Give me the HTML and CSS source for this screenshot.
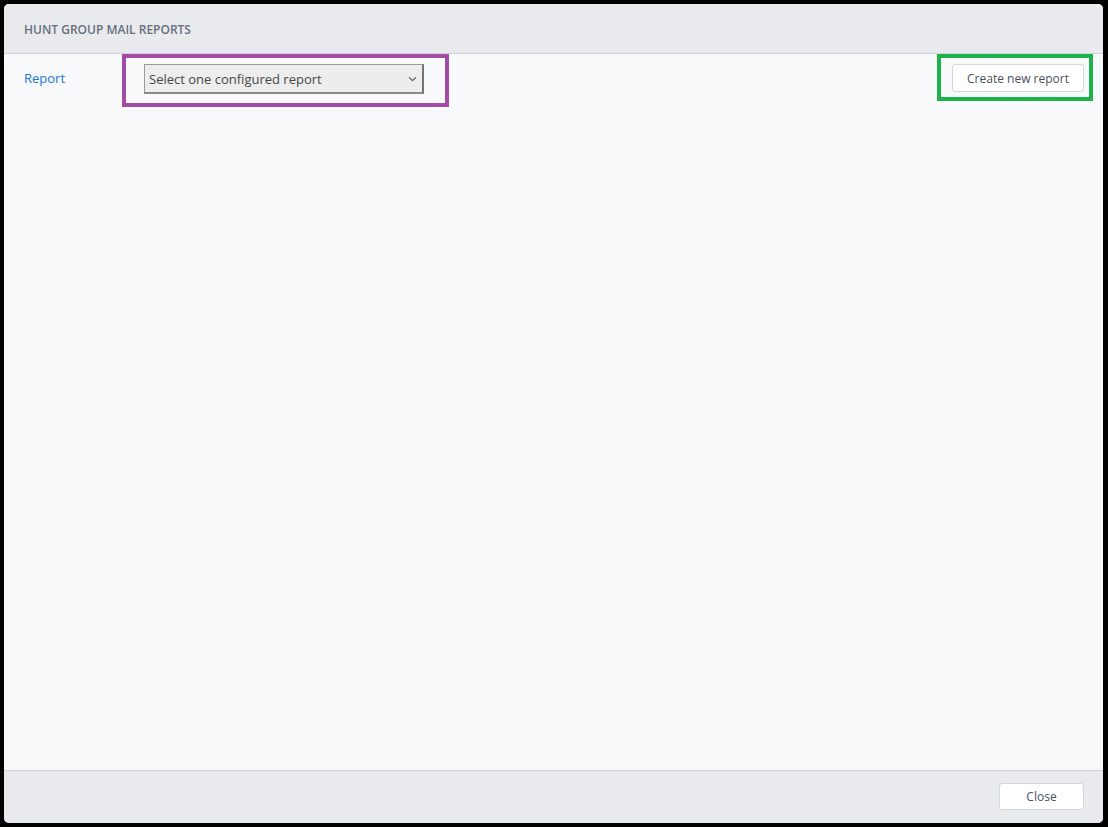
FILE: index.html
```html
<!DOCTYPE html>
<html>
<head>
<meta charset="utf-8">
<link rel="stylesheet" href="styles.css">
</head>
<body>
<div class="modal">
  <div class="modal-header">
    <span class="title">HUNT GROUP MAIL REPORTS</span>
  </div>
  <div class="modal-body">
    <div class="row">
      <a class="label" href="#">Report</a>
      <div class="hl-purple">
        <div class="select">
          <span>Select one configured report</span>
          <svg class="chev" width="9" height="6" viewBox="0 0 9 6"><path d="M1 1.2 L4.5 4.5 L8 1.2" fill="none" stroke="#6f6f6f" stroke-width="1.3"/></svg>
        </div>
      </div>
      <div class="spacer"></div>
      <div class="hl-green">
        <button class="btn">Create new report</button>
      </div>
    </div>
  </div>
  <div class="modal-footer">
    <button class="btn btn-close">Close</button>
  </div>
</div>
</body>
</html>
```
FILE: styles.css
```css
html, body {
  margin: 0;
  padding: 0;
  background: #000;
  width: 1108px;
  height: 827px;
  overflow: hidden;
}
body {
  font-family: "Open Sans", "Liberation Sans", sans-serif;
  padding: 4px 5px 4px 4px;
  box-sizing: border-box;
}
.modal {
  width: 1099px;
  height: 819px;
  background: #f8f9fb;
  border-radius: 5px;
  display: flex;
  flex-direction: column;
  overflow: hidden;
}
.modal-header {
  height: 49px;
  background: #e9eaed;
  border-bottom: 1px solid #cfd2d7;
  display: flex;
  align-items: center;
  padding-left: 20px;
  flex: none;
}
.title {
  font-size: 12px;
  color: #66707c;
  font-weight: 600;
  padding-top: 1px;
}
.modal-body {
  flex: 1;
  padding: 0 10px 0 20px;
}
.row {
  display: flex;
  align-items: flex-start;
}
.label {
  color: #1b78d6;
  font-size: 13px;
  text-decoration: none;
  width: 98px;
  margin-top: 16px;
  line-height: 17px;
}
.hl-purple {
  border: 4px solid #a24ca6;
  box-sizing: border-box;
  width: 327px;
  height: 53px;
  padding: 6px 21px 0 18px;
}
.select {
  height: 30px;
  box-sizing: border-box;
  border: 1px solid #9a9a9a;
  border-right: 2px solid #747474;
  border-bottom: 2px solid #8a8a8a;
  background: #ededee;
  display: flex;
  align-items: center;
  justify-content: space-between;
  padding: 0 5px 0 4px;
  font-size: 13px;
  color: #474747;
}
.chev {
  margin-top: 1px;
}
.spacer { flex: 1; }
.hl-green {
  border: 4px solid #1fb24a;
  box-sizing: border-box;
  width: 156px;
  height: 47px;
  padding: 6px 5px 0 11px;
}
.btn {
  font-family: "Open Sans", "Liberation Sans", sans-serif;
  background: #fff;
  border: 1px solid #d3d6db;
  border-radius: 3px;
  color: #4a515c;
  font-size: 12px;
  height: 28px;
  width: 132px;
  padding: 0;
  cursor: pointer;
}
.modal-footer {
  flex: none;
  background: #e9eaed;
  border-top: 1px solid #cfd2d7;
  display: flex;
  justify-content: flex-end;
  align-items: flex-start;
  padding: 12px 19px 0 0;
  box-sizing: border-box;
  height: 53px;
}
.btn-close {
  width: 85px;
  height: 27px;
}
```
